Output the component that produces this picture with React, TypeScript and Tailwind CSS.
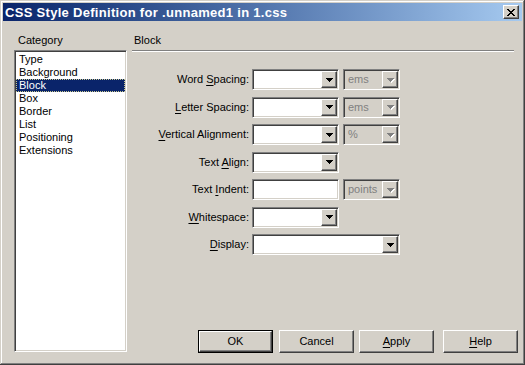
import React from 'react'

const font = { fontFamily: '"Liberation Sans", Arial, sans-serif' }

const sunken =
  'border border-t-[#808080] border-l-[#808080] border-b-white border-r-white shadow-[inset_1px_1px_0_#404040,inset_-1px_-1px_0_#d4d0c8]'
const raised =
  'border border-t-white border-l-white border-b-[#404040] border-r-[#404040] shadow-[inset_-1px_-1px_0_#808080,inset_1px_1px_0_#d4d0c8]'

function Arrow({ disabled }: { disabled?: boolean }) {
  return (
    <svg width="9" height="6" viewBox="0 0 9 6" shapeRendering="crispEdges">
      {disabled && <path d="M2 2h7v1H2zM3 3h5v1H3zM4 4h3v1H4zM5 5h1v1H5z" fill="#ffffff" />}
      <path d="M1 1h7v1H1zM2 2h5v1H2zM3 3h3v1H3zM4 4h1v1H4z" fill={disabled ? '#808080' : '#000000'} />
    </svg>
  )
}

function Select({ w, value, disabled }: { w: string; value?: string; disabled?: boolean }) {
  return (
    <div className={`flex h-[21px] p-[1px] ${w} ${sunken} ${disabled ? 'bg-[#d4d0c8]' : 'bg-white'}`}>
      <div className={`flex-1 flex items-center pl-[3px] ${disabled ? 'text-[#808080]' : 'text-black'}`}>{value}</div>
      <div className={`w-[16px] h-[17px] flex items-center justify-center bg-[#d4d0c8] ${raised}`}>
        <Arrow disabled={disabled} />
      </div>
    </div>
  )
}

function Label({ pre = '', u, post }: { pre?: string; u: string; post: string }) {
  return (
    <div className="w-[120px] pr-[3px] text-right">
      {pre}
      <span className="underline underline-offset-[2px]">{u}</span>
      {post}
    </div>
  )
}

function Button({ children, def, className = '' }: { children: React.ReactNode; def?: boolean; className?: string }) {
  if (def) {
    return (
      <div className={`w-[75px] h-[23px] border border-black ${className}`}>
        <div className={`w-full h-full flex items-center justify-center bg-[#d4d0c8] ${raised}`}>{children}</div>
      </div>
    )
  }
  return (
    <div className={`w-[75px] h-[23px] flex items-center justify-center bg-[#d4d0c8] ${raised} ${className}`}>
      {children}
    </div>
  )
}

const categories = ['Type', 'Background', 'Block', 'Box', 'Border', 'List', 'Positioning', 'Extensions']

export default function App() {
  return (
    <div
      className="w-[525px] h-[365px] bg-[#d4d0c8] p-[3px] text-[11px] leading-[13px] text-black shadow-[inset_-1px_-1px_0_#404040,inset_1px_1px_0_#d4d0c8,inset_-2px_-2px_0_#808080,inset_2px_2px_0_#ffffff]"
      style={font}
    >
      {/* title bar */}
      <div className="h-[18px] flex items-center pl-[2px] pr-[3px] bg-gradient-to-r from-[#0a246a] to-[#a6caf0]">
        <div className="flex-1 font-bold text-white text-[13px] tracking-[0.3px]">CSS Style Definition for .unnamed1 in 1.css</div>
        <div className={`w-[16px] h-[14px] flex items-center justify-center bg-[#d4d0c8] ${raised}`}>
          <svg width="8" height="7" viewBox="0 0 8 7" shapeRendering="crispEdges">
            <path d="M0 0h2v1H0zM6 0h2v1H6zM1 1h2v1H1zM5 1h2v1H5zM2 2h4v1H2zM3 3h2v1H3zM2 4h4v1H2zM1 5h2v1H1zM5 5h2v1H5zM0 6h2v1H0zM6 6h2v1H6z" fill="#000" />
          </svg>
        </div>
      </div>

      <div className="flex pl-[11px] pt-[13px]">
        {/* category */}
        <div className="w-[113px] flex flex-col">
          <div className="pl-[4px]">Category</div>
          <div className={`mt-[3px] h-[302px] bg-white p-[1px] ${sunken}`}>
            <div className="pt-[1px]">
              {categories.map((c) =>
                c === 'Block' ? (
                  <div key={c} className="h-[13px] bg-[#0a246a] text-white pl-[2px] border border-dotted border-[#c8c890] leading-[11px]">
                    {c}
                  </div>
                ) : (
                  <div key={c} className="h-[13px] pl-[3px]">
                    {c}
                  </div>
                )
              )}
            </div>
          </div>
        </div>

        {/* panel */}
        <div className="ml-[5px] w-[386px] flex flex-col">
          <div className="pl-[2px]">Block</div>
          <div className="mt-[3px] mr-[4px] h-[2px] border-t border-t-[#808080] border-b border-b-white" />

          <div className="mt-[17px] flex flex-col gap-[6.5px]">
            <div className="flex items-center">
              <Label pre="Word " u="S" post="pacing:" />
              <Select w="w-[87px]" />
              <Select w="w-[57px] ml-[4px]" value="ems" disabled />
            </div>
            <div className="flex items-center">
              <Label u="L" post="etter Spacing:" />
              <Select w="w-[87px]" />
              <Select w="w-[57px] ml-[4px]" value="ems" disabled />
            </div>
            <div className="flex items-center">
              <Label u="V" post="ertical Alignment:" />
              <Select w="w-[87px]" />
              <Select w="w-[57px] ml-[4px]" value="%" disabled />
            </div>
            <div className="flex items-center">
              <Label pre="Text " u="A" post="lign:" />
              <Select w="w-[87px]" />
            </div>
            <div className="flex items-center">
              <Label pre="Text " u="I" post="ndent:" />
              <div className={`w-[87px] h-[21px] bg-white ${sunken}`} />
              <Select w="w-[57px] ml-[4px]" value="points" disabled />
            </div>
            <div className="flex items-center">
              <Label u="W" post="hitespace:" />
              <Select w="w-[87px]" />
            </div>
            <div className="flex items-center">
              <Label u="D" post="isplay:" />
              <Select w="w-[148px]" />
            </div>
          </div>

          <div className="mt-[75px] flex justify-end">
            <Button def>OK</Button>
            <Button className="ml-[6px]">Cancel</Button>
            <Button className="ml-[5px]">
              <span className="underline underline-offset-[2px]">A</span>pply
            </Button>
            <Button className="ml-[9px]">
              <span className="underline underline-offset-[2px]">H</span>elp
            </Button>
          </div>
        </div>
      </div>
    </div>
  )
}
